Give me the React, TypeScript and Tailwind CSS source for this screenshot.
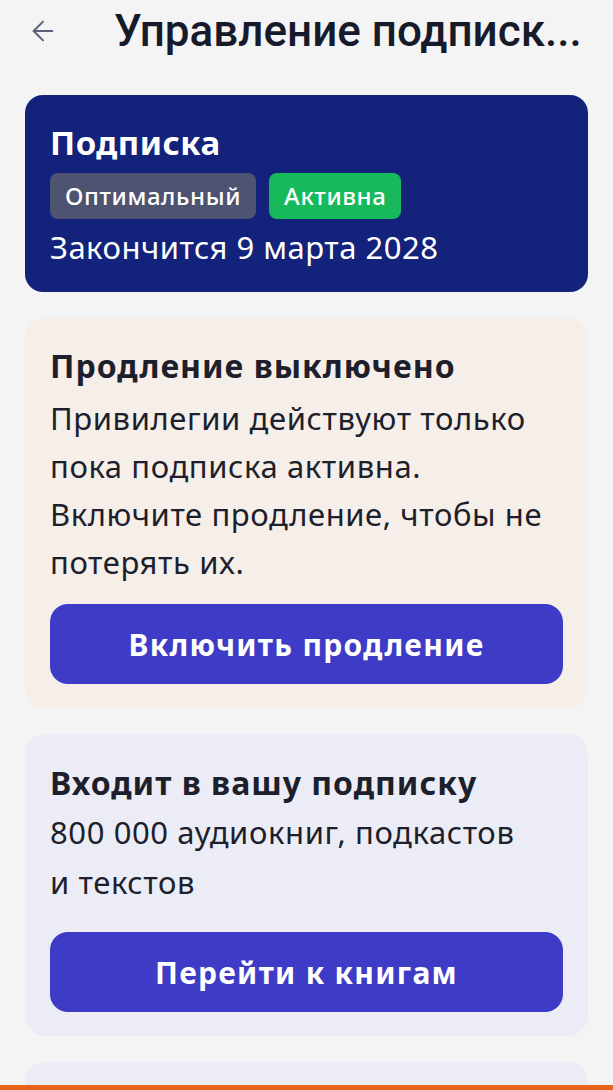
import { ArrowLeft } from "lucide-react";

const body = "font-['Noto_Sans',sans-serif]";

function ActionButton({ label, className = "" }: { label: string; className?: string }) {
  return (
    <button
      className={`flex h-[80px] w-full items-center justify-center rounded-[18px] bg-[#3e3bc6] text-[30px] font-bold tracking-[1.3px] text-white ${className}`}
    >
      {label}
    </button>
  );
}

export default function App() {
  return (
    <div className={`min-h-screen bg-[#f4f4f4] ${body}`}>
      {/* Header */}
      <header className="flex h-[62px] items-center pr-[25px]">
        <button className="ml-[27px] flex h-[32px] w-[32px] items-center justify-center text-[#5b5f78]">
          <ArrowLeft className="h-[32px] w-[32px]" strokeWidth={1.5} />
        </button>
        <h1 className="ml-[55px] whitespace-nowrap font-['Roboto',sans-serif] text-[44px] font-medium text-[#161a2b]">
          Управление подписк...
        </h1>
      </header>

      <main className="flex flex-col gap-[26px] px-[25px] pt-[33px]">
        {/* Subscription card */}
        <section className="rounded-[18px] bg-[#13227a] px-[25px] pb-[25px] pt-[28px] text-white">
          <h2 className="text-[33px] font-bold leading-[40px] tracking-[0.5px]">Подписка</h2>
          <div className="mt-[10px] flex gap-[13px]">
            <span className="flex h-[46px] items-center rounded-[8px] bg-[#4f5372] px-[15px] text-[24px] font-medium tracking-[0.6px]">
              Оптимальный
            </span>
            <span className="flex h-[46px] items-center rounded-[8px] bg-[#18b95a] px-[15px] text-[24px] font-medium tracking-[0.6px]">
              Активна
            </span>
          </div>
          <p className="mt-[8px] text-[31px] leading-[40px] tracking-[0.5px]">Закончится 9 марта 2028</p>
        </section>

        {/* Renewal card */}
        <section className="rounded-[20px] bg-[#f6eee9] px-[25px] pb-[24px] pt-[28px] text-[#1d1f2c]">
          <h2 className="text-[32px] font-bold leading-[40px] tracking-[1px]">Продление выключено</h2>
          <p className="mt-[8px] text-[31px] leading-[48px] tracking-[0.6px]">
            Привилегии действуют только пока подписка активна. Включите продление, чтобы не потерять их.
          </p>
          <ActionButton label="Включить продление" className="mt-[18px]" />
        </section>

        {/* Included card */}
        <section className="rounded-[20px] bg-[#ebecf5] px-[25px] pb-[24px] pt-[29px] text-[#1d1f2c]">
          <h2 className="text-[32px] font-bold leading-[40px] tracking-[1px]">Входит в вашу подписку</h2>
          <p className="mt-[4px] text-[31px] leading-[50px] tracking-[0.6px]">
            800 000 аудиокниг, подкастов
            <br />и текстов
          </p>
          <ActionButton label="Перейти к книгам" className="mt-[25px]" />
        </section>

        <section className="h-[60px] rounded-t-[20px] bg-[#ebecf5]" />
      </main>

      <div className="fixed inset-x-0 bottom-0 h-[5px] bg-[#e8641e]" />
    </div>
  );
}
